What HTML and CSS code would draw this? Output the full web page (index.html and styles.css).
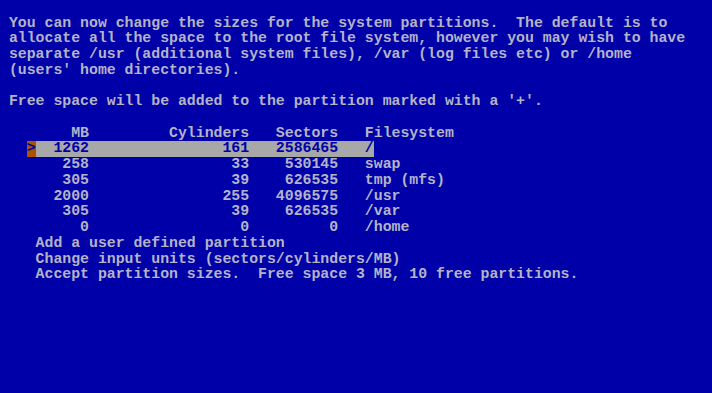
FILE: index.html
```html
<!DOCTYPE html>
<html lang="en">
<head>
    <meta charset="UTF-8">
    <title>sysinst - partition sizes</title>
    <link rel="stylesheet" href="styles.css">
</head>
<body>
    <div class="screen">
        <div class="line"></div>
        <div class="line"> You can now change the sizes for the system partitions.  The default is to</div>
        <div class="line"> allocate all the space to the root file system, however you may wish to have</div>
        <div class="line"> separate /usr (additional system files), /var (log files etc) or /home</div>
        <div class="line"> (users' home directories).</div>
        <div class="line"></div>
        <div class="line"> Free space will be added to the partition marked with a '+'.</div>
        <div class="line"></div>
        <div class="line">        MB         Cylinders   Sectors   Filesystem</div>
        <div class="line">   <span class="marker">&gt;</span><span class="bar">  1262               161   2586465   /</span></div>
        <div class="line">       258                33    530145   swap</div>
        <div class="line">       305                39    626535   tmp (mfs)</div>
        <div class="line">      2000               255   4096575   /usr</div>
        <div class="line">       305                39    626535   /var</div>
        <div class="line">         0                 0         0   /home</div>
        <div class="line">    Add a user defined partition</div>
        <div class="line">    Change input units (sectors/cylinders/MB)</div>
        <div class="line">    Accept partition sizes.  Free space 3 MB, 10 free partitions.</div>
    </div>
</body>
</html>
```

FILE: styles.css
```css
* {
    margin: 0;
    padding: 0;
    box-sizing: border-box;
}

html, body {
    width: 100%;
    height: 100%;
    background: #0000a8;
    overflow: hidden;
}

/* 80 x 25 text grid: 8.9px cells, 15.72px rows */
.screen {
    width: 712px;
    height: 393px;
    background: #0000a8;
    font-family: "Liberation Mono", "DejaVu Sans Mono", monospace;
    font-size: 14.83px;
    font-weight: bold;
    color: #b4b4c8;
}

.line {
    height: 15.72px;
    line-height: 15.72px;
    white-space: pre;
}

.marker,
.bar {
    display: inline-block;
    height: 15.72px;
    color: #0000a8;
    vertical-align: top;
}

.marker {
    background: #a85400;
}

.bar {
    background: #a8a8a8;
}
```
